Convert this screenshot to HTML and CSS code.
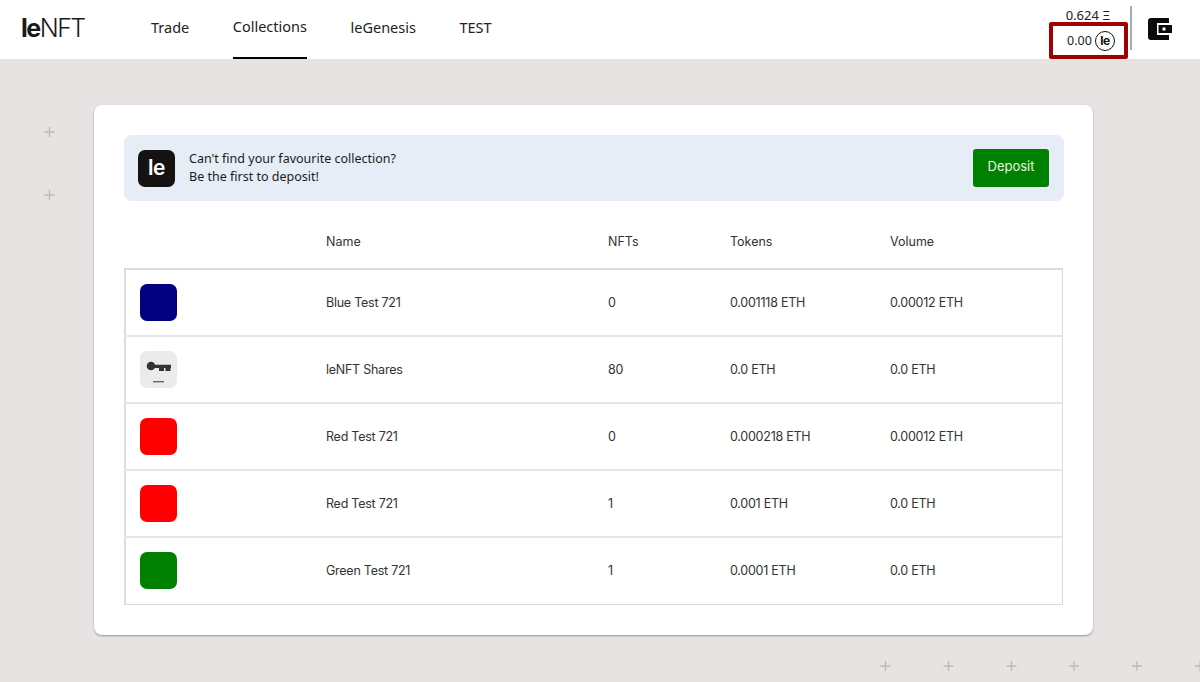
FILE: index.html
```html
<!DOCTYPE html>
<html lang="en">
<head>
<meta charset="utf-8">
<title>leNFT</title>
<link rel="stylesheet" href="styles.css">
</head>
<body>
<svg class="decor" width="1200" height="682" aria-hidden="true">
  <defs><path id="plus" d="M-5 0H5M0-5V5" stroke="#bdb9b9" stroke-width="1.3" fill="none"/></defs>
  <use href="#plus" x="49.5" y="132"/><use href="#plus" x="49.5" y="195"/>
  <use href="#plus" x="885.5" y="666"/><use href="#plus" x="948.5" y="666"/><use href="#plus" x="1011.5" y="666"/>
  <use href="#plus" x="1074" y="666"/><use href="#plus" x="1137" y="666"/><use href="#plus" x="1200" y="666"/>
</svg>
<header class="topbar">
  <div class="logo"><b>le</b>NFT</div>
  <nav class="nav">
    <a class="nav-item">Trade</a>
    <a class="nav-item active">Collections</a>
    <a class="nav-item">leGenesis</a>
    <a class="nav-item">TEST</a>
  </nav>
  <div class="balances">
    <div class="eth-balance">0.624 Ξ</div>
    <div class="le-balance">0.00 <span class="le-coin">le</span></div>
  </div>
  <div class="divider"></div>
  <svg class="wallet" width="24" height="22" viewBox="0 0 24 22">
    <path d="M3 0H21V5H9V17H21V22H3Q0 22 0 19V3Q0 0 3 0Z" fill="#0b0b0b"/>
    <path d="M10.500 7H24V15H10.500Z" fill="#0b0b0b"/>
    <rect x="14.500" y="9.500" width="3" height="3" fill="#fff"/>
  </svg>
</header>
<main class="card">
  <section class="banner">
    <div class="banner-icon">le</div>
    <p class="banner-text">Can't find your favourite collection?<br>Be the first to deposit!</p>
    <button class="deposit">Deposit</button>
  </section>
  <div class="row head">
    <span></span><span>Name</span><span>NFTs</span><span>Tokens</span><span>Volume</span>
  </div>
  <div class="rows">
    <div class="row item"><span class="thumb blue"></span><span>Blue Test 721</span><span>0</span><span>0.001118 ETH</span><span>0.00012 ETH</span></div>
    <div class="row item">
      <span class="thumb key">
        <svg width="37" height="37" viewBox="0 0 37 37">
          <circle cx="11" cy="15" r="4.300" fill="#333"/>
          <path d="M13 13.800H31V17H30.500V20H25.500V17H24V20H19V17H13Z" fill="#333"/>
          <rect x="13" y="30" width="11" height="1.400" fill="#666"/>
        </svg>
      </span>
      <span>leNFT Shares</span><span>80</span><span>0.0 ETH</span><span>0.0 ETH</span>
    </div>
    <div class="row item"><span class="thumb red"></span><span>Red Test 721</span><span>0</span><span>0.000218 ETH</span><span>0.00012 ETH</span></div>
    <div class="row item"><span class="thumb red"></span><span>Red Test 721</span><span>1</span><span>0.001 ETH</span><span>0.0 ETH</span></div>
    <div class="row item last"><span class="thumb green"></span><span>Green Test 721</span><span>1</span><span>0.0001 ETH</span><span>0.0 ETH</span></div>
  </div>
</main>
</body>
</html>
```
FILE: styles.css
```css
* { box-sizing: border-box; }
html, body { margin: 0; height: 682px; overflow: hidden; }
body {
  position: relative;
  background: #e6e3e2;
  font-family: "Noto Sans", sans-serif;
  color: #1c1c1c;
}
.decor { position: absolute; left: 0; top: 0; }
.topbar {
  position: relative;
  height: 59px;
  background: #fff;
  display: flex;
  align-items: stretch;
  padding-left: 21px;
}
.logo {
  width: 130px;
  font-family: Inter, sans-serif;
  font-weight: 300;
  font-size: 25px;
  line-height: 57px;
  letter-spacing: -1.500px;
  color: #1a1a1a;
}
.logo b { font-weight: 700; }
.nav { display: flex; gap: 43.500px; }
.nav-item {
  font-size: 14.500px;
  line-height: 54px;
  height: 59px;
  color: #222;
}
.nav-item.active { border-bottom: 2px solid #000; line-height: 52px; }
.balances { margin-left: auto; width: 79px; display: flex; flex-direction: column; align-items: center; }
.eth-balance { font-size: 13px; line-height: 16px; margin-top: 7px; padding-right: 1px; height: 15px; color: #222; }
.le-balance {
  width: 79px;
  height: 37px;
  border: 4px solid #a00000;
  border-radius: 2px;
  display: flex;
  align-items: center;
  justify-content: center;
  gap: 3px;
  font-size: 12.500px;
  padding-left: 5px;
  color: #222;
}
.le-coin {
  width: 20px;
  height: 20px;
  border: 1.500px solid #111;
  border-radius: 50%;
  display: flex;
  align-items: center;
  justify-content: center;
  font-family: Inter, sans-serif;
  font-weight: 700;
  font-size: 12px;
  letter-spacing: -0.5px;
  color: #111;
}
.divider { width: 2px; height: 44px; margin: 6px 0 0 2px; background: #a9a9a9; }
.wallet { margin: 18px 28px 0 16px; }
.card {
  position: relative;
  width: 999px;
  height: 530px;
  margin: 46px 0 0 94px;
  padding: 30px;
  background: #fff;
  border-radius: 8px;
  box-shadow: 0 1px 2px rgba(0, 0, 0, 0.35);
}
.banner {
  height: 66px;
  width: 940px;
  background: #e6edf6;
  border-radius: 8px;
  padding: 0 15px 0 14px;
  display: flex;
  align-items: center;
  gap: 14px;
}
.banner-icon {
  width: 37px;
  height: 37px;
  border-radius: 7px;
  background: #151312;
  color: #fff;
  font-family: Inter, sans-serif;
  font-weight: 600;
  font-size: 21px;
  letter-spacing: -0.5px;
  padding-bottom: 2px;
  display: flex;
  align-items: center;
  justify-content: center;
}
.banner-text { margin: 0; flex: 1; font-size: 12.500px; line-height: 18px; color: #1c1c1c; }
.deposit {
  width: 76px;
  height: 38px;
  border: 0;
  border-radius: 3px;
  background: #008000;
  color: #e8f5e0;
  font-family: Inter, sans-serif;
  font-size: 13px;
  padding: 0 0 5px;
}
.row {
  display: grid;
  grid-template-columns: 202px 282px 122px 160px 1fr;
  align-items: center;
  font-family: Inter, sans-serif;
  font-size: 12.500px;
  color: #333;
}
.head { height: 67px; padding-top: 13px; }
.rows { width: 939px; border: 1px solid #dcdcdc; border-top-width: 2px; border-left-width: 2px; }
.item { height: 67px; margin-left: -2px; letter-spacing: -0.25px; }
.item:not(:last-child) { border-bottom: 2px solid #e6e6e6; }
.item.last { margin-top: -1px; }
.thumb { width: 37px; height: 37px; border-radius: 7px; margin-left: 15.500px; display: block; overflow: hidden; }
.blue { background: #000080; }
.red { background: #ff0000; }
.green { background: #008000; }
.key { background: #ebebeb; }
```
